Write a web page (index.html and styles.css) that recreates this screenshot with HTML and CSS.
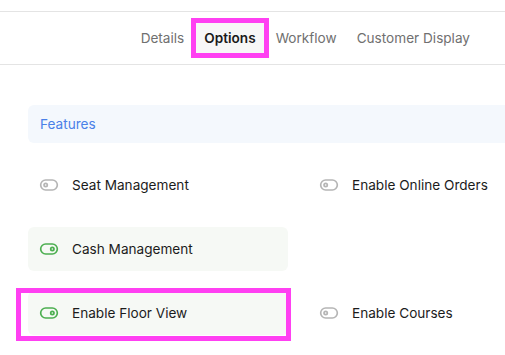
FILE: index.html
```html
<!DOCTYPE html>
<html>
<head>
<meta charset="utf-8">
<link rel="stylesheet" href="styles.css">
</head>
<body>
<div class="topbar"></div>
<nav class="tabs">
  <span class="tab">Details</span>
  <span class="tab active">Options</span>
  <span class="tab">Workflow</span>
  <span class="tab">Customer Display</span>
</nav>
<main class="content">
  <div class="section-head">Features</div>
  <div class="grid">
    <div class="row">
      <svg class="tog off" viewBox="0 0 24 24"><rect x="2" y="6" width="20" height="12" rx="6"/><circle cx="8" cy="12" r="2"/></svg>
      <span>Seat Management</span>
    </div>
    <div class="row">
      <svg class="tog off" viewBox="0 0 24 24"><rect x="2" y="6" width="20" height="12" rx="6"/><circle cx="8" cy="12" r="2"/></svg>
      <span>Enable Online Orders</span>
    </div>
    <div class="row on">
      <svg class="tog" viewBox="0 0 24 24"><rect x="2" y="6" width="20" height="12" rx="6"/><circle cx="16" cy="12" r="2"/></svg>
      <span>Cash Management</span>
    </div>
    <div class="row empty"></div>
    <div class="row on highlighted">
      <svg class="tog" viewBox="0 0 24 24"><rect x="2" y="6" width="20" height="12" rx="6"/><circle cx="16" cy="12" r="2"/></svg>
      <span>Enable Floor View</span>
    </div>
    <div class="row">
      <svg class="tog off" viewBox="0 0 24 24"><rect x="2" y="6" width="20" height="12" rx="6"/><circle cx="8" cy="12" r="2"/></svg>
      <span>Enable Courses</span>
    </div>
  </div>
</main>
</body>
</html>
```
FILE: styles.css
```css
* { box-sizing: border-box; }
*::before, *::after { box-sizing: border-box; }
html, body { margin: 0; padding: 0; }
body {
  width: 505px;
  height: 355px;
  overflow: hidden;
  background: #fff;
  font-family: Inter, "Noto Sans", sans-serif;
  font-size: 13.6px;
  color: #1c1c1c;
}
.topbar {
  height: 12px;
  border-bottom: 1px solid #e4e4e4;
}
.tabs {
  display: flex;
  justify-content: flex-end;
  align-items: center;
  gap: 4px;
  height: 53px;
  padding-right: 27px;
  border-bottom: 1px solid #e4e4e4;
}
.tab {
  height: 30px;
  line-height: 30px;
  padding: 0 8px;
  color: #707070;
}
.tab.active {
  color: #1a1a1a;
  font-weight: 600;
  background: #f7f7f7;
  outline: 5px solid #ff40f2;
}
.content {
  padding: 40px 0 0 28px;
}
.section-head {
  height: 38px;
  line-height: 38px;
  padding-left: 12px;
  background: #f4f8fd;
  border-radius: 6px 0 0 6px;
  color: #4a80e8;
}
.grid {
  display: grid;
  grid-template-columns: 260px 1fr;
  column-gap: 20px;
  row-gap: 20px;
  margin-top: 20px;
}
.row {
  position: relative;
  height: 44px;
  display: flex;
  align-items: center;
  gap: 13px;
  padding-left: 11px;
  border-radius: 6px;
  white-space: nowrap;
}
.row.on { background: #f6f9f5; }
.tog {
  width: 20px;
  height: 20px;
  fill: none;
  stroke: #4caf50;
  stroke-width: 2;
  flex: none;
}
.tog.off { stroke: #b5b5b5; }
.highlighted::after {
  content: "";
  position: absolute;
  left: -12px;
  top: -3px;
  width: 275px;
  height: 53px;
  border: 5px solid #ff40f2;
}
```
